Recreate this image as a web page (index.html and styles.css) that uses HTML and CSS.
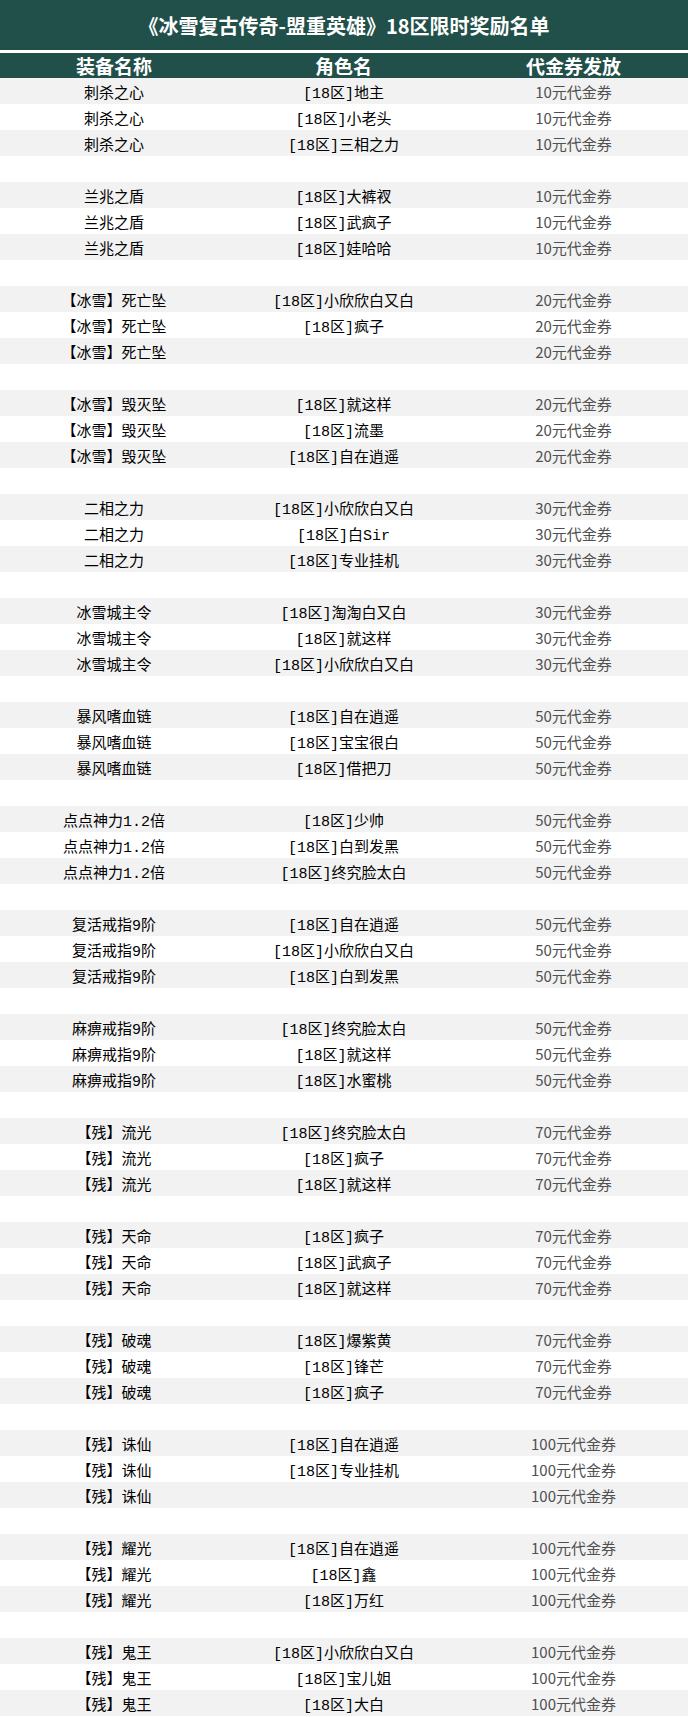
FILE: index.html
```html
<!DOCTYPE html>
<html lang="zh-CN">
<head>
<meta charset="utf-8">
<title>18区限时奖励名单</title>
<link rel="stylesheet" href="styles.css">
</head>
<body>
<div class="sheet">
  <div class="title">《冰雪复古传奇-盟重英雄》18区限时奖励名单</div>
  <table class="list">
    <colgroup><col class="c1"><col class="c2"><col class="c3"></colgroup>
    <thead>
      <tr><th>装备名称</th><th>角色名</th><th>代金券发放</th></tr>
    </thead>
    <tbody>
      <tr><td>刺杀之心</td><td>[18区]地主</td><td class="v">10元代金券</td></tr>
      <tr><td>刺杀之心</td><td>[18区]小老头</td><td class="v">10元代金券</td></tr>
      <tr><td>刺杀之心</td><td>[18区]三相之力</td><td class="v">10元代金券</td></tr>
      <tr class="gap"><td></td><td></td><td></td></tr>
      <tr><td>兰兆之盾</td><td>[18区]大裤衩</td><td class="v">10元代金券</td></tr>
      <tr><td>兰兆之盾</td><td>[18区]武疯子</td><td class="v">10元代金券</td></tr>
      <tr><td>兰兆之盾</td><td>[18区]娃哈哈</td><td class="v">10元代金券</td></tr>
      <tr class="gap"><td></td><td></td><td></td></tr>
      <tr><td>【冰雪】死亡坠</td><td>[18区]小欣欣白又白</td><td class="v">20元代金券</td></tr>
      <tr><td>【冰雪】死亡坠</td><td>[18区]疯子</td><td class="v">20元代金券</td></tr>
      <tr><td>【冰雪】死亡坠</td><td></td><td class="v">20元代金券</td></tr>
      <tr class="gap"><td></td><td></td><td></td></tr>
      <tr><td>【冰雪】毁灭坠</td><td>[18区]就这样</td><td class="v">20元代金券</td></tr>
      <tr><td>【冰雪】毁灭坠</td><td>[18区]流墨</td><td class="v">20元代金券</td></tr>
      <tr><td>【冰雪】毁灭坠</td><td>[18区]自在逍遥</td><td class="v">20元代金券</td></tr>
      <tr class="gap"><td></td><td></td><td></td></tr>
      <tr><td>二相之力</td><td>[18区]小欣欣白又白</td><td class="v">30元代金券</td></tr>
      <tr><td>二相之力</td><td>[18区]白Sir</td><td class="v">30元代金券</td></tr>
      <tr><td>二相之力</td><td>[18区]专业挂机</td><td class="v">30元代金券</td></tr>
      <tr class="gap"><td></td><td></td><td></td></tr>
      <tr><td>冰雪城主令</td><td>[18区]淘淘白又白</td><td class="v">30元代金券</td></tr>
      <tr><td>冰雪城主令</td><td>[18区]就这样</td><td class="v">30元代金券</td></tr>
      <tr><td>冰雪城主令</td><td>[18区]小欣欣白又白</td><td class="v">30元代金券</td></tr>
      <tr class="gap"><td></td><td></td><td></td></tr>
      <tr><td>暴风嗜血链</td><td>[18区]自在逍遥</td><td class="v">50元代金券</td></tr>
      <tr><td>暴风嗜血链</td><td>[18区]宝宝很白</td><td class="v">50元代金券</td></tr>
      <tr><td>暴风嗜血链</td><td>[18区]借把刀</td><td class="v">50元代金券</td></tr>
      <tr class="gap"><td></td><td></td><td></td></tr>
      <tr><td>点点神力1.2倍</td><td>[18区]少帅</td><td class="v">50元代金券</td></tr>
      <tr><td>点点神力1.2倍</td><td>[18区]白到发黑</td><td class="v">50元代金券</td></tr>
      <tr><td>点点神力1.2倍</td><td>[18区]终究脸太白</td><td class="v">50元代金券</td></tr>
      <tr class="gap"><td></td><td></td><td></td></tr>
      <tr><td>复活戒指9阶</td><td>[18区]自在逍遥</td><td class="v">50元代金券</td></tr>
      <tr><td>复活戒指9阶</td><td>[18区]小欣欣白又白</td><td class="v">50元代金券</td></tr>
      <tr><td>复活戒指9阶</td><td>[18区]白到发黑</td><td class="v">50元代金券</td></tr>
      <tr class="gap"><td></td><td></td><td></td></tr>
      <tr><td>麻痹戒指9阶</td><td>[18区]终究脸太白</td><td class="v">50元代金券</td></tr>
      <tr><td>麻痹戒指9阶</td><td>[18区]就这样</td><td class="v">50元代金券</td></tr>
      <tr><td>麻痹戒指9阶</td><td>[18区]水蜜桃</td><td class="v">50元代金券</td></tr>
      <tr class="gap"><td></td><td></td><td></td></tr>
      <tr><td>【残】流光</td><td>[18区]终究脸太白</td><td class="v">70元代金券</td></tr>
      <tr><td>【残】流光</td><td>[18区]疯子</td><td class="v">70元代金券</td></tr>
      <tr><td>【残】流光</td><td>[18区]就这样</td><td class="v">70元代金券</td></tr>
      <tr class="gap"><td></td><td></td><td></td></tr>
      <tr><td>【残】天命</td><td>[18区]疯子</td><td class="v">70元代金券</td></tr>
      <tr><td>【残】天命</td><td>[18区]武疯子</td><td class="v">70元代金券</td></tr>
      <tr><td>【残】天命</td><td>[18区]就这样</td><td class="v">70元代金券</td></tr>
      <tr class="gap"><td></td><td></td><td></td></tr>
      <tr><td>【残】破魂</td><td>[18区]爆紫黄</td><td class="v">70元代金券</td></tr>
      <tr><td>【残】破魂</td><td>[18区]锋芒</td><td class="v">70元代金券</td></tr>
      <tr><td>【残】破魂</td><td>[18区]疯子</td><td class="v">70元代金券</td></tr>
      <tr class="gap"><td></td><td></td><td></td></tr>
      <tr><td>【残】诛仙</td><td>[18区]自在逍遥</td><td class="v">100元代金券</td></tr>
      <tr><td>【残】诛仙</td><td>[18区]专业挂机</td><td class="v">100元代金券</td></tr>
      <tr><td>【残】诛仙</td><td></td><td class="v">100元代金券</td></tr>
      <tr class="gap"><td></td><td></td><td></td></tr>
      <tr><td>【残】耀光</td><td>[18区]自在逍遥</td><td class="v">100元代金券</td></tr>
      <tr><td>【残】耀光</td><td>[18区]鑫</td><td class="v">100元代金券</td></tr>
      <tr><td>【残】耀光</td><td>[18区]万红</td><td class="v">100元代金券</td></tr>
      <tr class="gap"><td></td><td></td><td></td></tr>
      <tr><td>【残】鬼王</td><td>[18区]小欣欣白又白</td><td class="v">100元代金券</td></tr>
      <tr><td>【残】鬼王</td><td>[18区]宝儿姐</td><td class="v">100元代金券</td></tr>
      <tr><td>【残】鬼王</td><td>[18区]大白</td><td class="v">100元代金券</td></tr>
    </tbody>
  </table>
</div>
</body>
</html>
```

FILE: styles.css
```css
html, body {
  margin: 0;
  padding: 0;
  background: #ffffff;
}

.sheet {
  width: 688px;
  font-family: "Liberation Mono", "Noto Sans CJK SC", monospace;
}

.title {
  height: 50px;
  line-height: 52px;
  background: #214f49;
  color: #ffffff;
  text-align: center;
  font-family: "Noto Sans CJK SC", sans-serif;
  font-weight: 700;
  font-size: 20px;
  border-bottom: 3px solid #ffffff;
}

.list {
  width: 688px;
  border-collapse: collapse;
  table-layout: fixed;
}

.list col.c1 { width: 228px; }
.list col.c2 { width: 231px; }
.list col.c3 { width: 229px; }

.list th {
  height: 25px;
  padding: 0;
  background: #214f49;
  color: #ffffff;
  font-family: "Noto Sans CJK SC", sans-serif;
  font-weight: 700;
  font-size: 19px;
  line-height: 25px;
  text-align: center;
}

.list td {
  height: 26px;
  padding: 7px 0 0 0;
  box-sizing: border-box;
  font-size: 15px;
  line-height: 19px;
  color: #000000;
  text-align: center;
  white-space: nowrap;
  vertical-align: top;
}

.list tbody tr:nth-child(odd) td {
  background: #f2f2f2;
}

.list tbody tr:nth-child(even) td {
  background: #ffffff;
}

.list td.v {
  padding-top: 2px;
  line-height: 24px;
  font-family: "Noto Sans CJK SC", sans-serif;
  color: #505050;
}
```
